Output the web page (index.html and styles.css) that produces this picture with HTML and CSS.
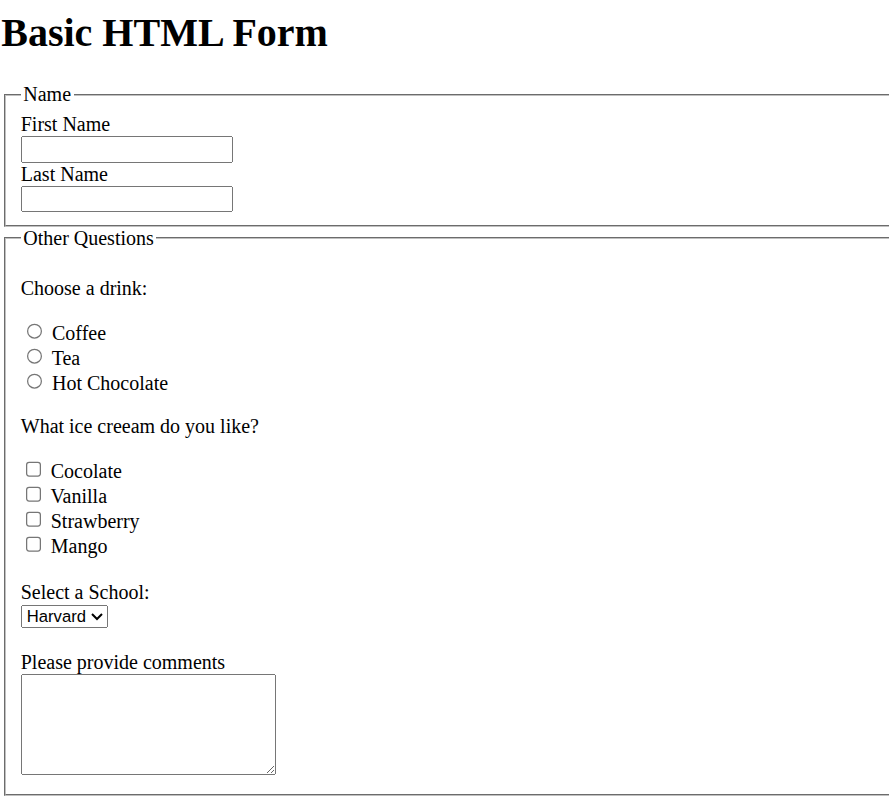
FILE: index.html
```html
<!DOCTYPE html>
<html lang="en">
<head>
<meta charset="utf-8">
<title>Basic HTML Form</title>
<link rel="stylesheet" href="styles.css">
</head>
<body class="page">
<h1 class="title">Basic HTML Form</h1>
<form class="form">
<fieldset class="group">
<legend class="group-legend">Name</legend>
<label for="fname">First Name</label><br>
<input class="text-input" type="text" id="fname" name="fname"><br>
<label for="lname">Last Name</label><br>
<input class="text-input" type="text" id="lname" name="lname">
</fieldset>
<fieldset class="group group-last">
<legend class="group-legend">Other Questions</legend>
<p class="question">Choose a drink:</p>
<input class="radio" type="radio" name="drink" id="coffee" value="coffee"> <label for="coffee">Coffee</label><br>
<input class="radio" type="radio" name="drink" id="tea" value="tea"> <label for="tea">Tea</label><br>
<input class="radio" type="radio" name="drink" id="choc" value="choc"> <label for="choc">Hot Chocolate</label><br>
<p class="question">What ice creeam do you like?</p>
<input class="check" type="checkbox" id="ic1" name="ic1"> <label for="ic1">Cocolate</label><br>
<input class="check" type="checkbox" id="ic2" name="ic2"> <label for="ic2">Vanilla</label><br>
<input class="check" type="checkbox" id="ic3" name="ic3"> <label for="ic3">Strawberry</label><br>
<input class="check" type="checkbox" id="ic4" name="ic4"> <label for="ic4">Mango</label><br>
<p class="question question-school">
<label for="school">Select a School:</label><br>
<select class="select" id="school" name="school">
<option>Harvard</option>
<option>Yale</option>
<option>MIT</option>
<option>Stanford</option>
</select>
</p>
<label for="comments">Please provide comments</label><br>
<textarea class="comments" id="comments" name="comments"></textarea>
</fieldset>
</form>
</body>
</html>
```
FILE: styles.css
```css
html {
  zoom: 1.25;
  overflow: hidden;
  background: #fff;
}

.page {
  margin: 0 0 0 1px;
  font-family: "Liberation Serif", "Times New Roman", serif;
  font-size: 16px;
  color: #000;
}

.title {
  margin: 7.4px 0 21.44px;
  font-size: 32px;
  font-weight: bold;
}

.form {
  margin: 0;
}

.group {
  margin: 0 -20px 0 2px;
  padding: 0.35em 0.75em 0.625em;
  border: 2px groove #c0c0c0;
}

.group-last {
  padding-bottom: 11px;
}

.group-legend {
  padding: 0 2px;
}

.text-input {
  box-sizing: border-box;
  width: 169.6px;
  font: 13.333px "Liberation Sans", Arial, sans-serif;
}

.question {
  margin: 16px 0;
}

.question-school {
  margin: 18.4px 0 18.8px;
}

.select {
  width: 69.6px;
  font: 13.333px "Liberation Sans", Arial, sans-serif;
}

.comments {
  box-sizing: border-box;
  width: 204px;
  height: 81px;
  font: 13.333px "Liberation Mono", monospace;
  vertical-align: baseline;
}
```
